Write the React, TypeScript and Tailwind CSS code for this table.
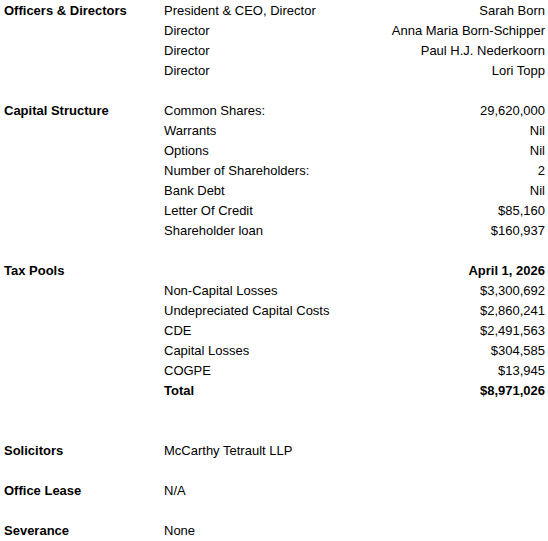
import React from 'react';

type Row = {
  label?: string;
  item?: string;
  value?: string;
  bold?: boolean;
};

const rows: Row[] = [
  { label: 'Officers & Directors', item: 'President & CEO, Director', value: 'Sarah Born' },
  { item: 'Director', value: 'Anna Maria Born-Schipper' },
  { item: 'Director', value: 'Paul H.J. Nederkoorn' },
  { item: 'Director', value: 'Lori Topp' },
  {},
  { label: 'Capital Structure', item: 'Common Shares:', value: '29,620,000' },
  { item: 'Warrants', value: 'Nil' },
  { item: 'Options', value: 'Nil' },
  { item: 'Number of Shareholders:', value: '2' },
  { item: 'Bank Debt', value: 'Nil' },
  { item: 'Letter Of Credit', value: '$85,160' },
  { item: 'Shareholder loan', value: '$160,937' },
  {},
  { label: 'Tax Pools', value: 'April 1, 2026', bold: true },
  { item: 'Non-Capital Losses', value: '$3,300,692' },
  { item: 'Undepreciated Capital Costs', value: '$2,860,241' },
  { item: 'CDE', value: '$2,491,563' },
  { item: 'Capital Losses', value: '$304,585' },
  { item: 'COGPE', value: '$13,945' },
  { item: 'Total', value: '$8,971,026', bold: true },
  {},
  {},
  { label: 'Solicitors', item: 'McCarthy Tetrault LLP' },
  {},
  { label: 'Office Lease', item: 'N/A' },
  {},
  { label: 'Severance', item: 'None' },
];

const App: React.FC = () => {
  return (
    <div className="w-[548px] bg-white pl-1 pr-[3px] pt-px text-[13px] leading-[20px] text-black font-['Liberation_Sans',Arial,sans-serif]">
      {rows.map((r, i) => (
        <div key={i} className="grid h-5 grid-cols-[160px_1fr_auto]">
          <div className="font-bold">{r.label}</div>
          <div className={r.bold ? 'font-bold' : ''}>{r.item}</div>
          <div className={'text-right ' + (r.bold ? 'font-bold' : '')}>{r.value}</div>
        </div>
      ))}
    </div>
  );
};

export default App;
